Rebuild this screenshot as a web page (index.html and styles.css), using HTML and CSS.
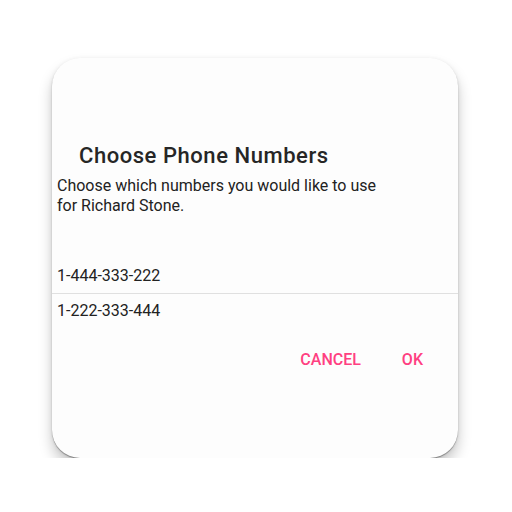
FILE: index.html
```html
<!DOCTYPE html>
<html>
<head>
<meta charset="utf-8">
<link rel="stylesheet" href="styles.css">
</head>
<body>
<div class="dialog">
  <h1 class="title">Choose Phone Numbers</h1>
  <p class="message">Choose which numbers you would like to use<br>for Richard Stone.</p>
  <ul class="numbers">
    <li class="number">1-444-333-222</li>
    <li class="number">1-222-333-444</li>
  </ul>
  <div class="actions">
    <span class="btn">CANCEL</span>
    <span class="btn">OK</span>
  </div>
</div>
</body>
</html>
```

FILE: styles.css
```css
html, body {
  margin: 0;
  padding: 0;
  background: #ffffff;
}
body {
  padding: 58px 0 0 52px;
  font-family: Roboto, "Noto Sans", sans-serif;
}
.dialog {
  box-sizing: border-box;
  width: 406px;
  height: 400px;
  background: #fdfdfd;
  border-radius: 28px;
  box-shadow: 0 1px 1px rgba(0,0,0,0.35), 0 9px 14px rgba(0,0,0,0.22), 0 1px 4px rgba(0,0,0,0.08);
  padding-top: 86px;
}
.title {
  margin: 0 0 0 27px;
  font-size: 22px;
  font-weight: 500;
  letter-spacing: 0.55px;
  line-height: 24px;
  color: #262626;
}
.message {
  margin: 8px 0 0 5px;
  font-size: 16px;
  line-height: 20px;
  color: #222222;
}
.numbers {
  list-style: none;
  margin: 43px 0 0 0;
  padding: 0;
}
.number {
  padding-left: 5px;
  font-size: 16px;
  line-height: 34px;
  color: #222222;
}
.number + .number {
  border-top: 1px solid #e0e0e0;
}
.actions {
  display: flex;
  justify-content: flex-end;
  gap: 41px;
  padding: 22px 35px 0 0;
}
.btn {
  font-size: 16px;
  font-weight: 500;
  color: #ff4081;
  line-height: 20px;
}
```
